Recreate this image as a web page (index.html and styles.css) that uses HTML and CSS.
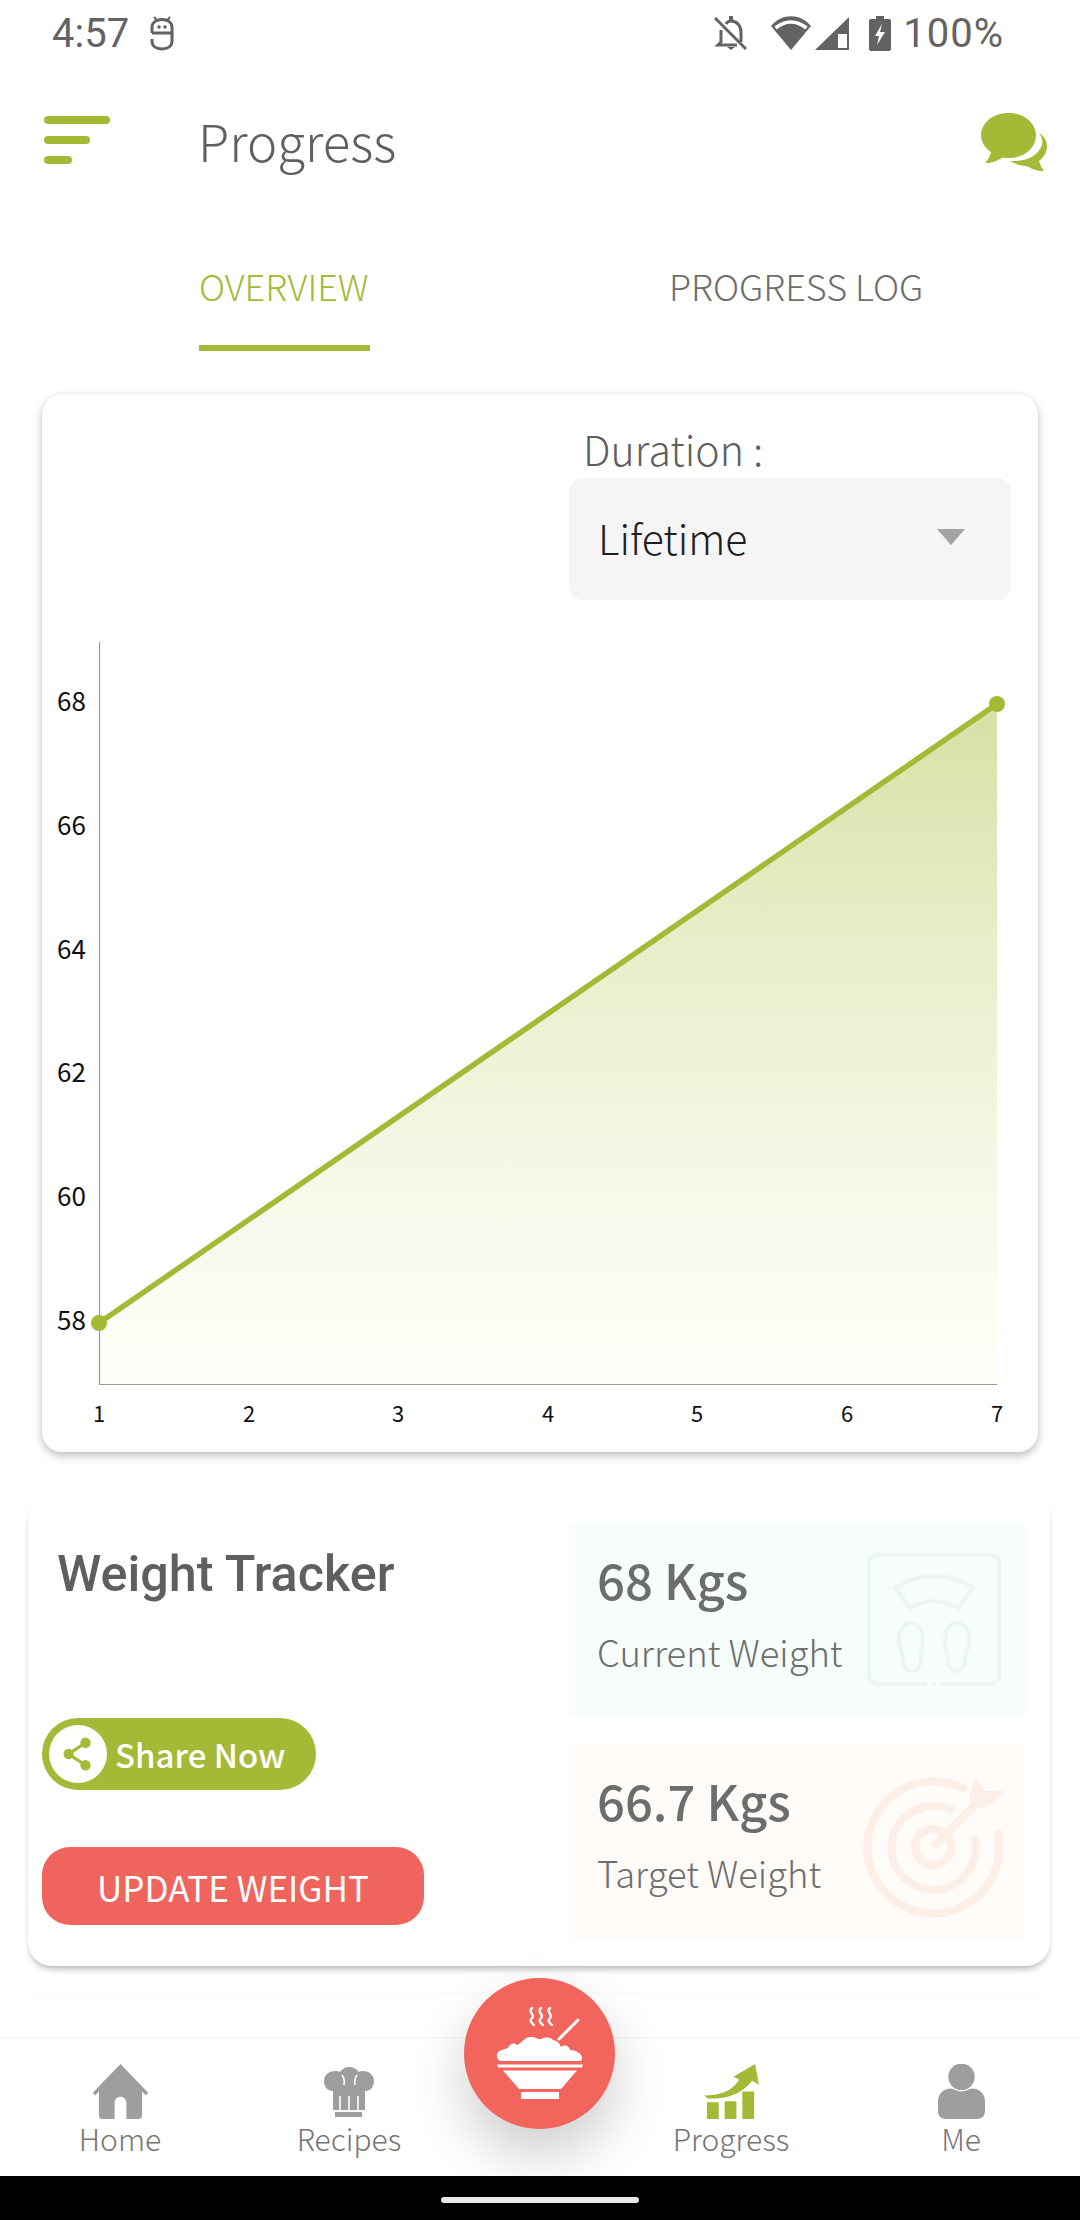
FILE: index.html
```html
<!DOCTYPE html>
<html lang="en">
<head>
    <meta charset="UTF-8">
    <meta name="viewport" content="width=device-width, initial-scale=1.0">
    <title>Progress</title>
    <link rel="stylesheet" href="styles.css">
</head>
<body>

<div class="screen">
    <div class="status-bar">
        <div class="status-left">
            <span class="status-time">4:57</span>
            <svg class="status-app" viewBox="0 0 24 35" width="24" height="35">
                <path d="M2 17V11C2 6 7 3.5 12 3.5S22 6 22 11V17H2" fill="none" stroke="#636363" stroke-width="3"/>
                <path d="M22 17v8c0 5-4 8-10 8S2 30 2 25v-2" fill="none" stroke="#636363" stroke-width="3"/>
                <path d="M4 1l2.500 3M20 1l-2.500 3" stroke="#636363" stroke-width="2"/>
                <circle cx="9" cy="11" r="1.800" fill="#636363"/><circle cx="15" cy="11" r="1.800" fill="#636363"/>
            </svg>
        </div>
        <div class="status-right">
            <svg class="status-bell" viewBox="0 0 34 34" width="34" height="34">
                <path d="M12 8c1-2 3-3 5-3 6 0 10 5 10 11v10M7 14v12l-3 3h19" fill="none" stroke="#636363" stroke-width="3"/>
                <path d="M13 31h8l-4 3zM15 0h4v4h-4z" fill="#636363"/>
                <path d="M1 2l31 31" stroke="#636363" stroke-width="3"/>
            </svg>
            <svg class="status-wifi" viewBox="0 0 40 34" width="40" height="34">
                <path d="M0 10C11-3 29-3 40 10L20 34z" fill="#636363"/>
                <path d="M4.500 12Q20 0 35.500 12" fill="none" stroke="#fff" stroke-width="3.500"/>
            </svg>
            <svg class="status-signal" viewBox="0 0 34 33" width="34" height="33">
                <path d="M34 0V33H0z" fill="#636363"/>
                <path d="M23 17h9v14h-9z" fill="#fff"/>
            </svg>
            <svg class="status-battery" viewBox="0 0 22 35" width="22" height="35">
                <path d="M7 0h8v3h5a2 2 0 0 1 2 2v28a2 2 0 0 1-2 2H2a2 2 0 0 1-2-2V5a2 2 0 0 1 2-2h5z" fill="#636363"/>
                <path d="M13 8l-7 12h4l-2 9 8-13h-5z" fill="#fff"/>
            </svg>
            <span class="status-percent">100%</span>
        </div>
    </div>

    <header class="app-header">
        <div class="menu-icon"><i class="bar-long"></i><i class="bar-mid"></i><i class="bar-short"></i></div>
        <h1 class="page-title">Progress</h1>
        <svg class="chat-icon" viewBox="0 0 66 59" width="66" height="59">
            <path d="M27.500 0C43 0 55 10 55 22.500S43 45 27.500 45c-2 0-4 0-6-.5C17 48 10 50 4 50c3-3 5-7 6-11C4 35 0 29 0 22.500 0 10 12 0 27.500 0z" fill="#a5b936"/>
            <path d="M58 20C64 24 66 29 66 33c0 6-3 11-8 15 1 4 3 7 5 10-6 0-13-2-17-5-6 0-12-2-17-5 14 1 28-4 32-16 1-4 0-8-3-12z" fill="#a5b936"/>
        </svg>
    </header>

    <nav class="tabs">
        <a class="tab tab-active">OVERVIEW</a>
        <a class="tab">PROGRESS LOG</a>
    </nav>

    <main class="content">
        <section class="chart-card">
            <div class="duration">
                <label class="duration-label">Duration :</label>
                <div class="duration-select">
                    <span>Lifetime</span>
                    <i class="select-arrow"></i>
                </div>
            </div>
            <svg class="chart" viewBox="0 0 996 860" width="996" height="860">
                <defs>
                    <linearGradient id="areaFill" x1="0" y1="0" x2="0" y2="1">
                        <stop offset="0" stop-color="#a5b936" stop-opacity="0.45"/>
                        <stop offset="0.75" stop-color="#c4cf5c" stop-opacity="0.12"/>
                        <stop offset="1" stop-color="#e8e88a" stop-opacity="0.05"/>
                    </linearGradient>
                </defs>
                <path d="M57 747L955 128V808H57z" fill="url(#areaFill)"/>
                <path d="M57.500 66V808.500H955" fill="none" stroke="#999" stroke-width="1.200"/>
                <path d="M57 747L955 128" fill="none" stroke="#a5b936" stroke-width="5.500"/>
                <circle cx="57" cy="747" r="8" fill="#a5b936"/>
                <circle cx="955" cy="128" r="8" fill="#a5b936"/>
                <g class="axis-y">
                    <text x="15" y="135">68</text>
                    <text x="15" y="259">66</text>
                    <text x="15" y="383">64</text>
                    <text x="15" y="506">62</text>
                    <text x="15" y="630">60</text>
                    <text x="15" y="754">58</text>
                </g>
                <g class="axis-x">
                    <text x="57" y="846">1</text>
                    <text x="207" y="846">2</text>
                    <text x="356" y="846">3</text>
                    <text x="506" y="846">4</text>
                    <text x="655" y="846">5</text>
                    <text x="805" y="846">6</text>
                    <text x="955" y="846">7</text>
                </g>
            </svg>
        </section>

        <section class="tracker-card">
            <div class="tracker-left">
                <h2 class="tracker-title">Weight Tracker</h2>
                <a class="share-btn">
                    <span class="share-circle">
                        <svg viewBox="0 0 32 36" width="30" height="36">
                            <path d="M24 6L6 18l18 12" fill="none" stroke="#a5b936" stroke-width="3.500"/>
                            <circle cx="24" cy="6" r="5.500" fill="#a5b936"/>
                            <circle cx="6" cy="18" r="5.500" fill="#a5b936"/>
                            <circle cx="24" cy="30" r="5.500" fill="#a5b936"/>
                        </svg>
                    </span>
                    <span>Share Now</span>
                </a>
                <a class="update-btn">UPDATE WEIGHT</a>
            </div>
            <div class="tracker-right">
                <div class="stat stat-current">
                    <div class="stat-text">
                        <div class="stat-value">68 Kgs</div>
                        <div class="stat-label">Current Weight</div>
                    </div>
                    <svg class="stat-icon" viewBox="0 0 134 134" width="134" height="134" fill="none" stroke="#ecf6f0" stroke-width="4">
                        <path d="M60 131H10a8 8 0 0 1-8-8V10a8 8 0 0 1 8-8h114a8 8 0 0 1 8 8v113a8 8 0 0 1-8 8H74M65 131h3"/>
                        <path d="M28 35c24-16 54-16 78 0l-15 20c-16-9-32-9-48 0z"/>
                        <path d="M44 70c8 0 12 8 12 18 0 8-3 12-3 21 0 5-3 9-8 9s-9-4-9-10c0-9-4-13-4-21 0-9 4-17 12-17zM90 70c-8 0-12 8-12 18 0 8 3 12 3 21 0 5 3 9 8 9s9-4 9-10c0-9 4-13 4-21 0-9-4-17-12-17z"/>
                    </svg>
                </div>
                <div class="stat stat-target">
                    <div class="stat-text">
                        <div class="stat-value">66.7 Kgs</div>
                        <div class="stat-label">Target Weight</div>
                    </div>
                    <svg class="stat-icon stat-icon-target" viewBox="0 0 144 144" width="144" height="144" fill="none" stroke="#fbefe7" stroke-width="8">
                        <path d="M105 17A66 66 0 1 0 136 57"/>
                        <path d="M93 38A42 42 0 1 0 113 63"/>
                        <circle cx="72" cy="74" r="18"/>
                        <path d="M72 74l46-46"/>
                        <path d="M108 26l6-22 10 14 20 0-18 16-14 2z" fill="#fbefe7" stroke="none"/>
                    </svg>
                </div>
            </div>
        </section>

        <section class="next-card"></section>
    </main>

    <footer class="bottom-nav">
        <a class="nav-item">
            <svg viewBox="0 0 56 56" width="55" height="55">
                <path d="M28 0L56 29l-2 3-4-4v24a4 4 0 0 1-4 4H34V40c0-9-12-9-12 0v16H10a4 4 0 0 1-4-4V28l-4 4-2-3z" fill="#9e9e9e"/>
            </svg>
            <span>Home</span>
        </a>
        <a class="nav-item">
            <svg viewBox="0 -3 50 55" width="50" height="55">
                <path d="M9 24C3 24 0 19 0 14 0 8 5 4 11 4c2 0 4 0 5 1 2-3 5-5 9-5s8 2 10 5c1-1 3-1 4-1 6 0 11 4 11 10 0 5-3 10-9 10v19H9z" fill="#9e9e9e"/>
                <path d="M11 45h27v5H11z" fill="#9e9e9e"/>
                <path d="M18 8c2 3 3 6 2 10M33 8c-2 3-3 6-2 10M16 29v14M25 29v14M34 29v14" fill="none" stroke="#fff" stroke-width="1.600"/>
            </svg>
            <span>Recipes</span>
        </a>
        <div class="nav-spacer"></div>
        <a class="nav-item nav-active">
            <svg viewBox="0 0 56 56" width="55" height="55">
                <path d="M0 32c16 0 28-4 36-16l-6-3L52 0l4 21-7-4C40 28 28 36 4 35z" fill="#a5b936"/>
                <path d="M3 39h12v17H3zM21 38h12v18H21zM39 28h12v28H39z" fill="#a5b936"/>
            </svg>
            <span>Progress</span>
        </a>
        <a class="nav-item">
            <svg viewBox="0 0 48 56" width="47" height="55">
                <circle cx="24" cy="13" r="13.500" fill="#9e9e9e"/>
                <path d="M0 38c0-8 6-13 13-13 3 0 6 3 11 3s8-3 11-3c7 0 13 5 13 13v10c0 5-3 8-8 8H8c-5 0-8-3-8-8z" fill="#9e9e9e"/>
            </svg>
            <span>Me</span>
        </a>
    </footer>

    <a class="fab">
        <svg viewBox="0 0 90 96" width="90" height="96">
            <path d="M37 2c-5 4 4 7 0 10-3 3 0 5 2 7M46 2c-5 4 4 7 0 10-3 3 0 5 2 7M55 2c-5 4 4 7 0 10-3 3 0 5 2 7" fill="none" stroke="#fff" stroke-width="2.400" stroke-linecap="round"/>
            <path d="M64 33L83 14" stroke="#fff" stroke-width="3" stroke-linecap="round"/>
            <path d="M5 55C0 52 1 45 7 44 9 43 11 43 13 42 14 38 19 36 22 39 26 38 29 31 36 31 41 31 43 34 46 33 50 31 55 31 58 34 63 35 65 38 66 41 70 38 74 40 75 44 80 44 87 47 87 52 87 54 86 55 85 55z" fill="#fff"/>
            <path d="M2 58.500h86l-1 3H3z" fill="#fff"/>
            <path d="M8 64.500h74L66 83H24z" fill="#fff"/>
            <path d="M26 86h38v7H26z" fill="#fff"/>
        </svg>
    </a>

    <div class="system-nav"><i class="home-pill"></i></div>
</div>

</body>
</html>
```

FILE: styles.css
```css
* {
    box-sizing: border-box;
}
body {
    margin: 0;
    font-family: "Noto Sans CJK SC", "Noto Sans", sans-serif;
    background-color: #fff;
}
a {
    text-decoration: none;
}
.screen {
    position: relative;
    width: 1080px;
    height: 2220px;
    display: flex;
    flex-direction: column;
    overflow: hidden;
    background-color: #fff;
}

/* status bar */
.status-bar {
    height: 66px;
    flex: none;
    display: flex;
    justify-content: space-between;
    align-items: center;
    padding: 0 76px 0 52px;
    font-family: Roboto, sans-serif;
    font-size: 40px;
    color: #636363;
}
.status-left {
    display: flex;
    align-items: center;
    gap: 21px;
}
.status-right {
    display: flex;
    align-items: center;
}
.status-wifi {
    margin-left: 23px;
}
.status-signal {
    margin-left: 4px;
}
.status-battery {
    margin-left: 20px;
}
.status-percent {
    margin-left: 12px;
    letter-spacing: 1px;
}

/* header */
.app-header {
    height: 148px;
    flex: none;
    display: flex;
    align-items: center;
    padding: 0 33px 0 44px;
}
.menu-icon {
    width: 66px;
    display: flex;
    flex-direction: column;
    gap: 12px;
}
.menu-icon i {
    display: block;
    height: 8px;
    border-radius: 4px;
    background-color: #a5b936;
}
.bar-long {
    width: 66px;
}
.bar-mid {
    width: 46px;
}
.bar-short {
    width: 28px;
}
.page-title {
    margin: 0 0 0 88px;
    flex: 1;
    font-size: 51px;
    font-weight: 300;
    color: #5f5f5f;
}
.chat-icon {
    margin-top: 5px;
}

/* tabs */
.tabs {
    height: 140px;
    flex: none;
    display: flex;
    padding: 48px 0 0 199px;
}
.tab {
    font-size: 36px;
    font-weight: 300;
    color: #6e6e6e;
    height: 89px;
    line-height: 46px;
    white-space: nowrap;
}
.tab-active {
    color: #a5b936;
    border-bottom: 6px solid #a5b936;
    width: 171px;
    margin-right: 299px;
}

/* content */
.content {
    flex: 1;
    min-height: 0;
    overflow: hidden;
    padding-top: 40px;
}
.chart-card {
    width: 996px;
    height: 1058px;
    margin-left: 42px;
    padding-top: 36px;
    background-color: #fff;
    border-radius: 20px;
    box-shadow: 0 4px 10px rgba(0, 0, 0, 0.24), 0 0 4px rgba(0, 0, 0, 0.06);
}
.duration {
    margin-left: 527px;
    width: 442px;
}
.duration-label {
    display: block;
    padding-left: 14px;
    height: 48px;
    line-height: 36px;
    font-size: 41px;
    font-weight: 300;
    color: #5f5f5f;
}
.duration-select {
    height: 122px;
    display: flex;
    justify-content: space-between;
    align-items: center;
    padding: 0 46px 4px 29px;
    background-color: #f5f5f5;
    border-radius: 14px;
    font-size: 41px;
    font-weight: 300;
    color: #1f1f1f;
}
.select-arrow {
    width: 0;
    height: 0;
    border-left: 14px solid transparent;
    border-right: 14px solid transparent;
    border-top: 16px solid #a3a3a3;
}
.chart {
    display: block;
    margin-top: -24px;
}
.chart text {
    font-size: 26px;
    fill: #111;
}
.axis-x text {
    font-size: 22px;
    text-anchor: middle;
}

/* weight tracker */
.tracker-card {
    width: 1022px;
    height: 472px;
    margin: 42px 0 0 28px;
    display: flex;
    background-color: #fff;
    border-radius: 24px;
    box-shadow: 0 5px 6px -2px rgba(0, 0, 0, 0.28), 0 0 2px rgba(0, 0, 0, 0.03);
}
.tracker-left {
    width: 541px;
    display: flex;
    flex-direction: column;
    align-items: flex-start;
    padding: 47px 0 0 14px;
}
.tracker-title {
    margin: 0 0 0 15px;
    height: 177px;
    font-family: Roboto, sans-serif;
    font-size: 50.3px;
    font-weight: 500;
    line-height: 66px;
    color: #5f5f5f;
}
.share-btn {
    width: 274px;
    height: 72px;
    display: flex;
    align-items: center;
    padding-left: 7px;
    gap: 8px;
    border-radius: 36px;
    background-color: #a5b936;
    color: #fff;
    font-size: 33px;
    font-weight: 500;
}
.share-circle {
    width: 58px;
    height: 58px;
    display: flex;
    justify-content: center;
    align-items: center;
    border-radius: 50%;
    background-color: #fff;
}
.update-btn {
    width: 382px;
    height: 78px;
    margin-top: 57px;
    display: flex;
    justify-content: center;
    align-items: center;
    border-radius: 28px;
    background-color: #ef655d;
    color: #fff;
    font-size: 35px;
    font-weight: 400;
}
.tracker-right {
    display: flex;
    flex-direction: column;
    gap: 26px;
    padding-top: 30px;
}
.stat {
    width: 456px;
    height: 192px;
    display: flex;
    justify-content: space-between;
    align-items: center;
    padding: 0 24px 0 28px;
}
.stat-current {
    background-color: #f7fdfa;
}
.stat-target {
    height: 197px;
    padding-right: 20px;
    background-color: #fefbf8;
}
.stat-text {
    padding-bottom: 16px;
}
.stat-icon-target {
    margin-top: 8px;
}
.stat-value {
    font-size: 49px;
    font-weight: 500;
    line-height: 64px;
    color: #6d6d6d;
}
.stat-label {
    margin-top: 14px;
    font-size: 36.4px;
    line-height: 52px;
    font-weight: 300;
    color: #6e6e6e;
}

/* next card, cut by the bottom bar */
.next-card {
    width: 1022px;
    height: 200px;
    margin: 28px 0 0 28px;
    border-radius: 24px;
    box-shadow: 0 -1px 2px rgba(0, 0, 0, 0.03);
}

/* bottom bar */
.bottom-nav {
    height: 139px;
    flex: none;
    display: flex;
    padding-top: 26px;
    background-color: #fff;
    border-top: 1px solid #f5f5f5;
}
.nav-item {
    width: 230px;
    height: 92px;
    display: flex;
    flex-direction: column;
    align-items: center;
    font-size: 30px;
    font-weight: 300;
    line-height: 44px;
    color: #757575;
}
.nav-item span {
    margin-top: -3px;
}
.nav-item:first-child {
    margin-left: 5px;
}
.nav-item:first-child + .nav-item {
    width: 228px;
}
.nav-spacer {
    width: 153px;
}
.nav-item svg {
    flex: none;
}
.fab {
    position: absolute;
    left: 464px;
    top: 1978px;
    width: 151px;
    height: 151px;
    display: flex;
    justify-content: center;
    align-items: center;
    border-radius: 50%;
    background-color: #f1655d;
    box-shadow: 0 26px 56px rgba(0, 0, 0, 0.2);
}

/* system navigation */
.system-nav {
    position: relative;
    height: 44px;
    flex: none;
    display: flex;
    justify-content: center;
    padding-top: 21px;
    background-color: #000;
}
.home-pill {
    display: block;
    width: 198px;
    height: 6px;
    border-radius: 3px;
    background-color: #e8e8e8;
}
```
